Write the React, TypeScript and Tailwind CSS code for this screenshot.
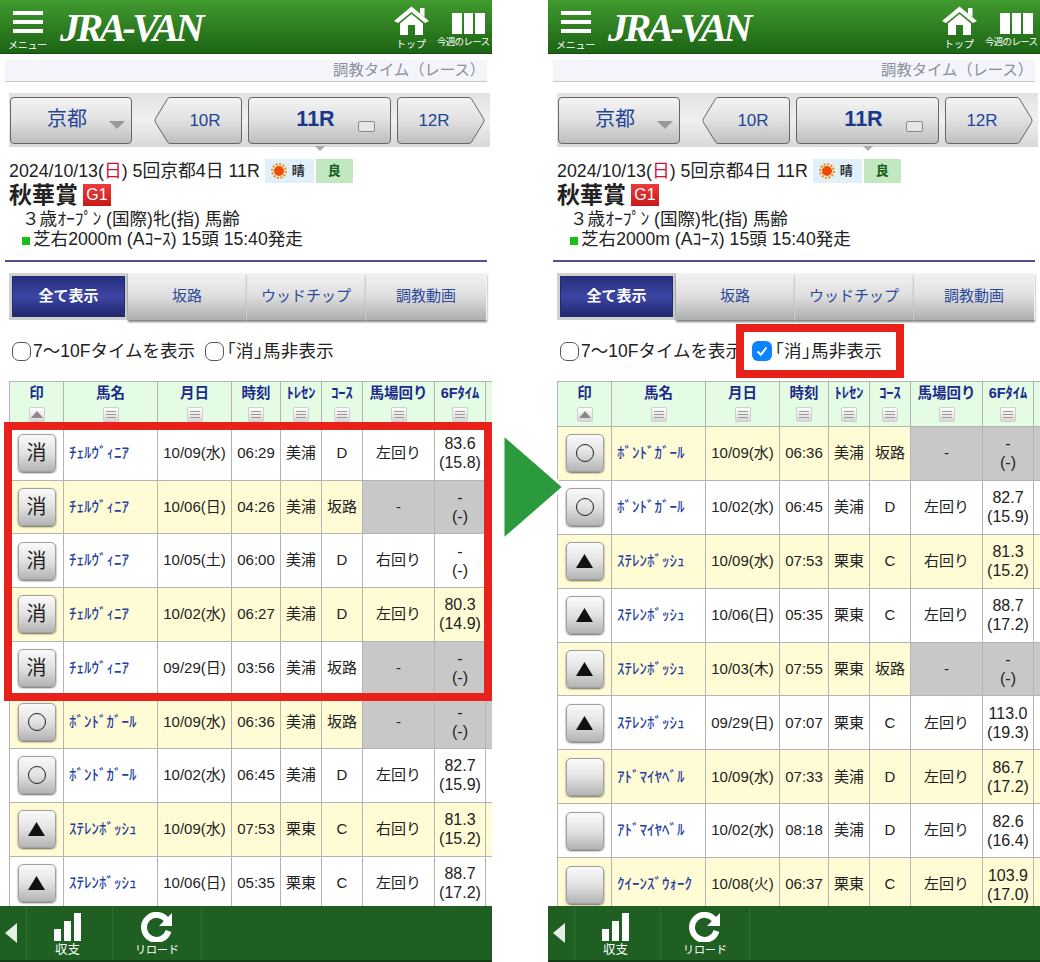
const fontSans = "font-['Liberation_Sans','Noto_Sans_CJK_JP',sans-serif]"

type Mark = '消' | '○' | '▲' | ''
type Row = {
  mark: Mark
  name: string
  date: string
  time: string
  center: string
  course: string
  turn: string
  six: string
  last: string
}

const leftRows: Row[] = [
  { mark: '消', name: 'ﾁｪﾙｳﾞｨﾆｱ', date: '10/09(水)', time: '06:29', center: '美浦', course: 'D', turn: '左回り', six: '83.6', last: '(15.8)' },
  { mark: '消', name: 'ﾁｪﾙｳﾞｨﾆｱ', date: '10/06(日)', time: '04:26', center: '美浦', course: '坂路', turn: '-', six: '-', last: '(-)' },
  { mark: '消', name: 'ﾁｪﾙｳﾞｨﾆｱ', date: '10/05(土)', time: '06:00', center: '美浦', course: 'D', turn: '右回り', six: '-', last: '(-)' },
  { mark: '消', name: 'ﾁｪﾙｳﾞｨﾆｱ', date: '10/02(水)', time: '06:27', center: '美浦', course: 'D', turn: '左回り', six: '80.3', last: '(14.9)' },
  { mark: '消', name: 'ﾁｪﾙｳﾞｨﾆｱ', date: '09/29(日)', time: '03:56', center: '美浦', course: '坂路', turn: '-', six: '-', last: '(-)' },
  { mark: '○', name: 'ﾎﾞﾝﾄﾞｶﾞｰﾙ', date: '10/09(水)', time: '06:36', center: '美浦', course: '坂路', turn: '-', six: '-', last: '(-)' },
  { mark: '○', name: 'ﾎﾞﾝﾄﾞｶﾞｰﾙ', date: '10/02(水)', time: '06:45', center: '美浦', course: 'D', turn: '左回り', six: '82.7', last: '(15.9)' },
  { mark: '▲', name: 'ｽﾃﾚﾝﾎﾞｯｼｭ', date: '10/09(水)', time: '07:53', center: '栗東', course: 'C', turn: '右回り', six: '81.3', last: '(15.2)' },
  { mark: '▲', name: 'ｽﾃﾚﾝﾎﾞｯｼｭ', date: '10/06(日)', time: '05:35', center: '栗東', course: 'C', turn: '左回り', six: '88.7', last: '(17.2)' },
]

const rightRows: Row[] = [
  { mark: '○', name: 'ﾎﾞﾝﾄﾞｶﾞｰﾙ', date: '10/09(水)', time: '06:36', center: '美浦', course: '坂路', turn: '-', six: '-', last: '(-)' },
  { mark: '○', name: 'ﾎﾞﾝﾄﾞｶﾞｰﾙ', date: '10/02(水)', time: '06:45', center: '美浦', course: 'D', turn: '左回り', six: '82.7', last: '(15.9)' },
  { mark: '▲', name: 'ｽﾃﾚﾝﾎﾞｯｼｭ', date: '10/09(水)', time: '07:53', center: '栗東', course: 'C', turn: '右回り', six: '81.3', last: '(15.2)' },
  { mark: '▲', name: 'ｽﾃﾚﾝﾎﾞｯｼｭ', date: '10/06(日)', time: '05:35', center: '栗東', course: 'C', turn: '左回り', six: '88.7', last: '(17.2)' },
  { mark: '▲', name: 'ｽﾃﾚﾝﾎﾞｯｼｭ', date: '10/03(木)', time: '07:55', center: '栗東', course: '坂路', turn: '-', six: '-', last: '(-)' },
  { mark: '▲', name: 'ｽﾃﾚﾝﾎﾞｯｼｭ', date: '09/29(日)', time: '07:07', center: '栗東', course: 'C', turn: '左回り', six: '113.0', last: '(19.3)' },
  { mark: '', name: 'ｱﾄﾞﾏｲﾔﾍﾞﾙ', date: '10/09(水)', time: '07:33', center: '美浦', course: 'D', turn: '左回り', six: '86.7', last: '(17.2)' },
  { mark: '', name: 'ｱﾄﾞﾏｲﾔﾍﾞﾙ', date: '10/02(水)', time: '08:18', center: '美浦', course: 'D', turn: '左回り', six: '82.6', last: '(16.4)' },
  { mark: '', name: 'ｸｲｰﾝｽﾞｳｫｰｸ', date: '10/08(火)', time: '06:37', center: '栗東', course: 'C', turn: '左回り', six: '103.9', last: '(17.0)' },
]

const headers = ['印', '馬名', '月日', '時刻', 'ﾄﾚｾﾝ', 'ｺｰｽ', '馬場回り', '6Fﾀｲﾑ']
const gridCols = 'grid grid-cols-[54px_94px_74px_49px_41px_41px_72px_51px_50px]'
const cell = 'flex items-center justify-center border-r border-b border-[#b4b4b4] text-[#222]'

function Header() {
  return (
    <div className="h-[54px] shrink-0 relative flex bg-gradient-to-b from-[#3f9a2e] via-[#2f7f22] to-[#1c6414] border-b border-[#174d10] text-white">
      <div className="w-[56px] flex flex-col items-center pt-[11px]">
        <div className="w-[30px] -ml-[1px] flex flex-col gap-[5px]">
          <div className="h-[4px] bg-white" />
          <div className="h-[4px] bg-white" />
          <div className="h-[4px] bg-white" />
        </div>
        <span className="text-[10px] leading-[12px] mt-[7px] whitespace-nowrap -ml-[1px] tracking-[-0.3px]">メニュー</span>
      </div>
      <span className="font-['Liberation_Serif',serif] italic font-bold text-[40px] leading-[56px] tracking-[-3.6px] ml-[4px]">
        JRA-VAN
      </span>
      <div className="ml-auto flex">
        <div className="w-[60px] flex flex-col items-center pt-[6px] pr-[2px]">
          <svg width="35" height="30" viewBox="0 0 35 30">
            <path d="M17.5 0.5 L35 15 L31 17 L17.5 6 L4 17 L0 15 Z" fill="#fff" />
            <path d="M26 2 h4.5 v9 L26 7.5 Z" fill="#fff" />
            <path d="M6 17.5 L17.5 8 L29 17.5 V29 H21 V19 H14 V29 H6 Z" fill="#fff" />
          </svg>
          <span className="text-[10px] leading-[12px] mt-[3px] whitespace-nowrap">トップ</span>
        </div>
        <div className="w-[50px] flex flex-col pt-[13px]">
          <div className="flex gap-[2px] ml-[10px]">
            <div className="w-[9.5px] h-[21px] bg-white" />
            <div className="w-[9.5px] h-[21px] bg-white" />
            <div className="w-[9.5px] h-[21px] bg-white" />
          </div>
          <span className="text-[9.5px] leading-[12px] mt-[2px] -ml-[5px] whitespace-nowrap tracking-[-0.7px]">今週のレース</span>
        </div>
      </div>
    </div>
  )
}

// arrow shaped race button, direction picks the path
function ArrowButton({ label, dir, gradId }: { label: string; dir: 'left' | 'right'; gradId: string }) {
  const d =
    dir === 'left'
      ? 'M16 0.5 H84 Q87.5 0.5 87.5 4 V43 Q87.5 46.5 84 46.5 H16 Q14.5 46.5 13.5 45 L1.5 25.5 Q0.5 23.5 1.5 21.5 L13.5 2 Q14.5 0.5 16 0.5 Z'
      : 'M4 0.5 H72 Q73.5 0.5 74.5 2 L86.5 21.5 Q87.5 23.5 86.5 25.5 L74.5 45 Q73.5 46.5 72 46.5 H4 Q0.5 46.5 0.5 43 V4 Q0.5 0.5 4 0.5 Z'
  return (
    <div className="relative w-[88px] h-[47px] flex items-center justify-center">
      <svg className="absolute inset-0" width="88" height="47" viewBox="0 0 88 47">
        <defs>
          <linearGradient id={gradId} x1="0" y1="0" x2="0" y2="1">
            <stop offset="0" stopColor="#f4f4f4" />
            <stop offset="0.5" stopColor="#e0e0e0" />
            <stop offset="1" stopColor="#bebebe" />
          </linearGradient>
        </defs>
        <path d={d} fill={`url(#${gradId})`} stroke="#666" />
      </svg>
      <span className={`relative text-[17px] text-[#1f4596] ${dir === 'left' ? 'ml-[14px]' : '-ml-[14px]'}`}>{label}</span>
    </div>
  )
}

function RaceNav({ id }: { id: string }) {
  const btn = 'h-[47px] rounded-[4px] border border-[#666] bg-gradient-to-b from-[#f4f4f4] via-[#e0e0e0] to-[#bebebe] flex items-center justify-center relative'
  return (
    <div className="mt-[11px] ml-[9px] w-[481px] h-[54px] shrink-0 pt-[4px] pl-[1px] bg-gradient-to-b from-[#e2e2e2] via-[#f0f0f0] to-[#d8d8d8] flex relative">
      <div className={`${btn} w-[122px]`}>
        <span className="text-[20px] text-[#1f4596] -ml-[8px] -mt-[3px]">京都</span>
        <span className="absolute right-[6px] top-[23px] w-0 h-0 border-l-[8px] border-r-[8px] border-t-[8px] border-l-transparent border-r-transparent border-t-[#999]" />
      </div>
      <div className="ml-[22px]">
        <ArrowButton label="10R" dir="left" gradId={`${id}-l`} />
      </div>
      <div className={`${btn} w-[143px] ml-[6px]`}>
        <span className="text-[21.5px] font-bold text-[#16398c] -ml-[8px] -mt-[3px]">11R</span>
        <span className="absolute right-[15px] top-[23px] w-[17px] h-[11px] rounded-[2px] border border-[#888] bg-[#e6e6e6]" />
      </div>
      <div className="ml-[6px]">
        <ArrowButton label="12R" dir="right" gradId={`${id}-r`} />
      </div>
      <span className="absolute left-[306px] top-[53px] w-0 h-0 border-l-[5px] border-r-[5px] border-t-[5px] border-l-transparent border-r-transparent border-t-[#aaa]" />
    </div>
  )
}

function RaceInfo() {
  return (
    <div className="ml-[9px] mt-[12px] h-[101px] shrink-0 text-[#222] relative">
      <div className="flex items-center h-[24px] text-[17.8px] whitespace-nowrap">
        <span>2024/10/13(<span className="text-[#d0103a]">日</span>) 5回京都4日 11R</span>
        <div className="ml-[5px] w-[49px] h-[24px] bg-[#dff0fa] flex items-center pl-[6px] gap-[5px]">
          <svg width="16" height="16" viewBox="0 0 16 16">
            <circle cx="8" cy="8" r="5" fill="#ee4a08" />
            <circle cx="8" cy="8" r="6.8" fill="none" stroke="#f59008" strokeWidth="2.2" strokeDasharray="2 1.56" />
          </svg>
          <span className="text-[13px] font-bold text-[#333]">晴</span>
        </div>
        <div className="ml-[2px] w-[37px] h-[24px] bg-[#c2e8c2] flex items-center justify-center text-[13px] font-bold text-[#14601c]">良</div>
      </div>
      <div className="flex items-center h-[26px] -mt-[1px]">
        <span className="text-[23px] font-bold leading-[26px]">秋華賞</span>
        <span className="ml-[5px] w-[28px] h-[22px] bg-gradient-to-b from-[#ee3a3a] to-[#c81818] text-white text-[16px] flex items-center justify-center">G1</span>
      </div>
      <div className="mt-[1px] ml-[13px] h-[20px] leading-[20px] text-[17.6px] whitespace-nowrap">３歳ｵｰﾌﾟﾝ (国際)牝(指) 馬齢</div>
      <div className="h-[20px] leading-[20px] flex items-center text-[17.6px] whitespace-nowrap ml-[13px]">
        <span className="w-[8px] h-[8px] bg-[#18c018] mr-[3px] mt-[3px]" />
        芝右2000m (Aｺｰｽ) 15頭 15:40発走
      </div>
    </div>
  )
}

function Tabs() {
  const tab = 'w-[119px] h-[47px] border-r border-[#f4f4f4] bg-gradient-to-b from-[#f2f2f2] via-[#dedede] to-[#aeaeae] shadow-[0_2px_2px_rgba(0,0,0,0.5)] flex items-center justify-center text-[15px] text-[#2c4a9a]'
  return (
    <div className="flex ml-[9px] mt-[11px] shrink-0">
      <div className="w-[119px] h-[47px] bg-[#cfcfcf] p-[3px]">
        <div className="h-full border border-[#20286e] bg-gradient-to-b from-[#26307e] via-[#3d45a4] to-[#20296f] flex items-center justify-center text-[15px] font-bold text-white">
          全て表示
        </div>
      </div>
      <div className={tab}>坂路</div>
      <div className={tab}>ウッドチップ</div>
      <div className={`${tab} w-[121px]`}>調教動画</div>
    </div>
  )
}

function Options({ checked }: { checked: boolean }) {
  return (
    <div className="flex items-center h-[22px] ml-[12px] mt-[20px] shrink-0 text-[17.5px] text-[#222] whitespace-nowrap">
      <span className="w-[19px] h-[19px] rounded-[7px] border border-[#555] bg-white mr-[2px]" />
      <span>7〜10Fタイムを表示</span>
      {checked ? (
        <span className="w-[20px] h-[20px] rounded-[6px] bg-[#0a84ff] ml-[9px] flex items-center justify-center">
          <svg width="14" height="14" viewBox="0 0 14 14">
            <path d="M2.5 7.5 L5.8 10.8 L11.5 3.5" fill="none" stroke="#fff" strokeWidth="2" />
          </svg>
        </span>
      ) : (
        <span className="w-[19px] h-[19px] rounded-[7px] border border-[#555] bg-white ml-[10px]" />
      )}
      <span className="ml-[3px] tracking-[0.3px]">｢消｣馬非表示</span>
    </div>
  )
}

function SortButton({ first }: { first: boolean }) {
  return (
    <div className="w-[16px] h-[15px] rounded-[2px] border border-[#cfcfcf] bg-gradient-to-b from-[#fff] to-[#d8d8d8] flex flex-col items-center justify-center gap-[2px]">
      {first ? (
        <span className="w-0 h-0 border-l-[6px] border-r-[6px] border-b-[7px] border-l-transparent border-r-transparent border-b-[#8a8a8a]" />
      ) : (
        <>
          <span className="w-[10px] h-[1px] bg-[#999]" />
          <span className="w-[10px] h-[1px] bg-[#999]" />
          <span className="w-[10px] h-[1px] bg-[#999]" />
        </>
      )}
    </div>
  )
}

function MarkButton({ mark }: { mark: Mark }) {
  return (
    <div className="w-[38px] h-[38px] rounded-[5px] border border-[#a0a0a0] bg-gradient-to-b from-[#fafafa] via-[#e2e2e2] to-[#b4b4b4] shadow-[0_1px_2px_rgba(0,0,0,0.6)] flex items-center justify-center text-[20px] text-[#222]">
      {mark === '○' && <span className="w-[18px] h-[18px] rounded-full border-[1.5px] border-[#222]" />}
      {mark === '▲' && (
        <svg width="17" height="14" viewBox="0 0 17 14">
          <path d="M8.5 0 L17 14 H0 Z" fill="#111" />
        </svg>
      )}
      {mark === '消' && mark}
    </div>
  )
}

function RaceTable({ rows, rowClass }: { rows: Row[]; rowClass: string }) {
  return (
    <div className="flex-1 min-h-0 overflow-hidden ml-[9px] mt-[19px] w-[540px]">
      <div className={`${gridCols} h-[46px] bg-[#e4fbe4] border-t border-l border-[#b4b4b4]`}>
        {headers.map((h, i) => (
          <div key={h} className="border-r border-b border-[#b4b4b4] flex flex-col items-center pt-[1px] gap-[3px]">
            <span className="text-[14.5px] leading-[21px] font-bold text-[#1c2a8c] whitespace-nowrap">{h}</span>
            <SortButton first={i === 0} />
          </div>
        ))}
        <div className="border-b border-[#b4b4b4]" />
      </div>
      {rows.map((r, i) => {
        const bg = i % 2 === (rows === leftRows ? 1 : 0) ? 'bg-[#fffbd5]' : 'bg-white'
        const gray = r.turn === '-' ? 'bg-[#c8c8c8]' : ''
        return (
          <div key={i} className={`${gridCols} ${rowClass} ${bg} border-l border-[#b4b4b4] text-[15px]`}>
            <div className={cell}>
              <MarkButton mark={r.mark} />
            </div>
            <div className="flex items-center border-r border-b border-[#b4b4b4] pl-[5px] font-medium text-[#1f3f9e] whitespace-nowrap">{r.name}</div>
            <div className={cell}>{r.date}</div>
            <div className={cell}>{r.time}</div>
            <div className={cell}>{r.center}</div>
            <div className={cell}>{r.course}</div>
            <div className={`${cell} ${gray}`}>{r.turn}</div>
            <div className={`${cell} ${gray} flex-col text-[16px] leading-[19px]`}>
              <span>{r.six}</span>
              <span>{r.last}</span>
            </div>
            <div className={`border-b border-[#b4b4b4] ${gray}`} />
          </div>
        )
      })}
    </div>
  )
}

function Footer() {
  return (
    <div className="h-[56px] shrink-0 flex bg-[#1f5f22] border-b-2 border-[#123f15] text-white">
      <div className="w-[27px] border-r border-[#2c6e2f] flex items-center pl-[5px]">
        <span className="w-0 h-0 border-t-[10px] border-b-[10px] border-r-[12px] border-t-transparent border-b-transparent border-r-[#e6eee6]" />
      </div>
      <div className="w-[86px] border-r border-[#2c6e2f] flex flex-col items-center pt-[6px] pr-[4px]">
        <div className="flex items-end gap-[3px] h-[29px]">
          <div className="w-[7px] h-[12px] bg-white" />
          <div className="w-[7px] h-[20px] bg-white" />
          <div className="w-[7px] h-[28px] bg-white" />
        </div>
        <span className="text-[12.5px] leading-[14px] mt-[2px]">収支</span>
      </div>
      <div className="w-[89px] border-r border-[#2c6e2f] flex flex-col items-center pt-[6px]">
        <svg width="32" height="30" viewBox="0 0 32 30">
          <path d="M26 8.5 A12.5 12.5 0 1 0 27.5 19" fill="none" stroke="#fff" strokeWidth="6" />
          <path d="M31 1 V14 H18 Z" fill="#fff" />
        </svg>
        <span className="text-[11px] leading-[14px] mt-[1px]">リロード</span>
      </div>
    </div>
  )
}

function Phone({ rows, checked, id, rowClass }: { rows: Row[]; checked: boolean; id: string; rowClass: string }) {
  return (
    <div className="w-[492px] h-[962px] flex flex-col overflow-hidden bg-white">
      <Header />
      <div className="mt-[6px] mx-[5px] h-[22px] shrink-0 bg-[#f3f5fb] border-b border-[#c8c8c8] text-[15.3px] leading-[20px] text-[#8a8f9a] text-right pr-[2px]">
        調教タイム（レース）
      </div>
      <RaceNav id={id} />
      <RaceInfo />
      <div className="mx-[5px] h-[2px] shrink-0 bg-[#52528e]" />
      <Tabs />
      <Options checked={checked} />
      <RaceTable rows={rows} rowClass={rowClass} />
      <Footer />
    </div>
  )
}

export default function App() {
  return (
    <div className={`relative w-[1040px] h-[962px] flex justify-between bg-white overflow-hidden ${fontSans}`}>
      <Phone rows={leftRows} checked={false} id="a" rowClass="h-[53.7px]" />
      <Phone rows={rightRows} checked={true} id="b" rowClass="h-[53.9px]" />

      {/* red highlights and the arrow between the two screens */}
      <div className="absolute left-[4px] top-[422px] w-[488px] h-[279px] border-[8px] border-[#e8211a]" />
      <div className="absolute left-[736px] top-[324px] w-[168px] h-[54px] border-[8px] border-[#e8211a]" />
      <svg className="absolute left-[500px] top-[430px]" width="68" height="114" viewBox="0 0 68 114">
        <path d="M3 4 L64 57 L3 110 Z" fill="#2a9a3c" stroke="#fff" strokeWidth="3" />
      </svg>
    </div>
  )
}
